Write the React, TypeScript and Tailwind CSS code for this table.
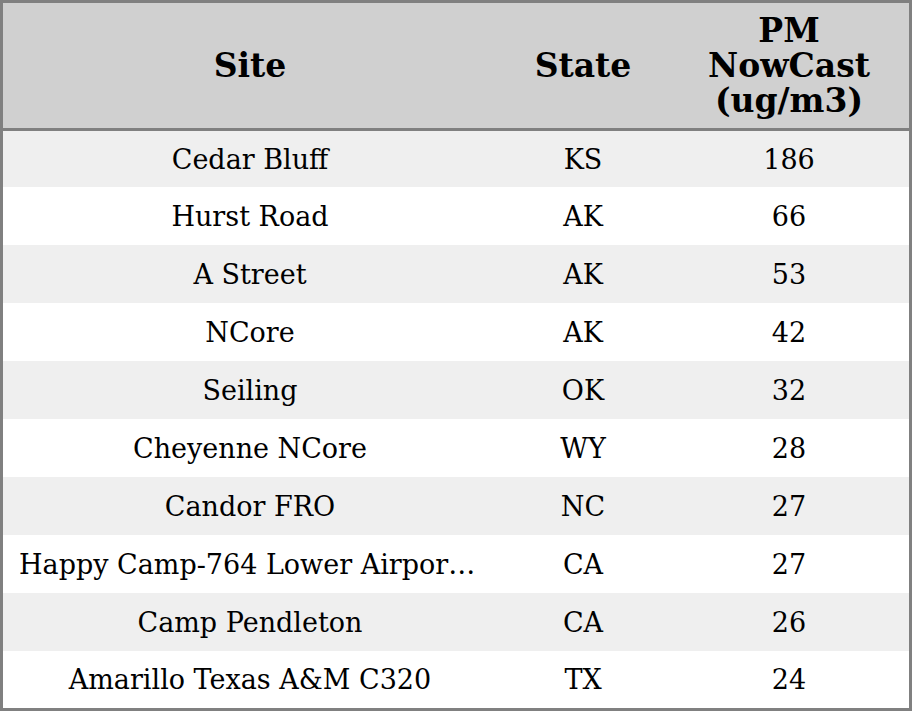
const rows = [
  { site: "Cedar Bluff", state: "KS", pm: 186 },
  { site: "Hurst Road", state: "AK", pm: 66 },
  { site: "A Street", state: "AK", pm: 53 },
  { site: "NCore", state: "AK", pm: 42 },
  { site: "Seiling", state: "OK", pm: 32 },
  { site: "Cheyenne NCore", state: "WY", pm: 28 },
  { site: "Candor FRO", state: "NC", pm: 27 },
  { site: "Happy Camp-764 Lower Airport Rd", state: "CA", pm: 27 },
  { site: "Camp Pendleton", state: "CA", pm: 26 },
  { site: "Amarillo Texas A&M C320", state: "TX", pm: 24 },
]

export default function App() {
  return (
    <div
      className="w-[912px] h-[711px] border-[3px] border-[#808080] bg-white text-black flex flex-col"
      style={{ fontFamily: '"DejaVu Serif", serif' }}
    >
      {/* header */}
      <div className="grid grid-cols-[494px_172px_240px] h-[128px] shrink-0 bg-[#d0d0d0] border-b-[3px] border-[#808080] text-[33px] font-bold leading-[35px]">
        <div className="flex items-center justify-center">Site</div>
        <div className="flex items-center justify-center">State</div>
        <div className="flex items-center justify-center text-center">
          PM
          <br />
          NowCast
          <br />
          (ug/m3)
        </div>
      </div>

      {rows.map((r, i) => (
        <div
          key={r.site}
          className={
            "grid grid-cols-[494px_172px_240px] items-center pt-0.5 text-[27px] " +
            (i % 2 === 0 ? "bg-[#efefef] " : "bg-white ") +
            (i === 0 ? "h-[56px]" : i === rows.length - 1 ? "h-[57px]" : "h-[58px]")
          }
        >
          <div className="px-4 truncate text-center">{r.site}</div>
          <div className="text-center">{r.state}</div>
          <div className="text-center">{r.pm}</div>
        </div>
      ))}
    </div>
  )
}
